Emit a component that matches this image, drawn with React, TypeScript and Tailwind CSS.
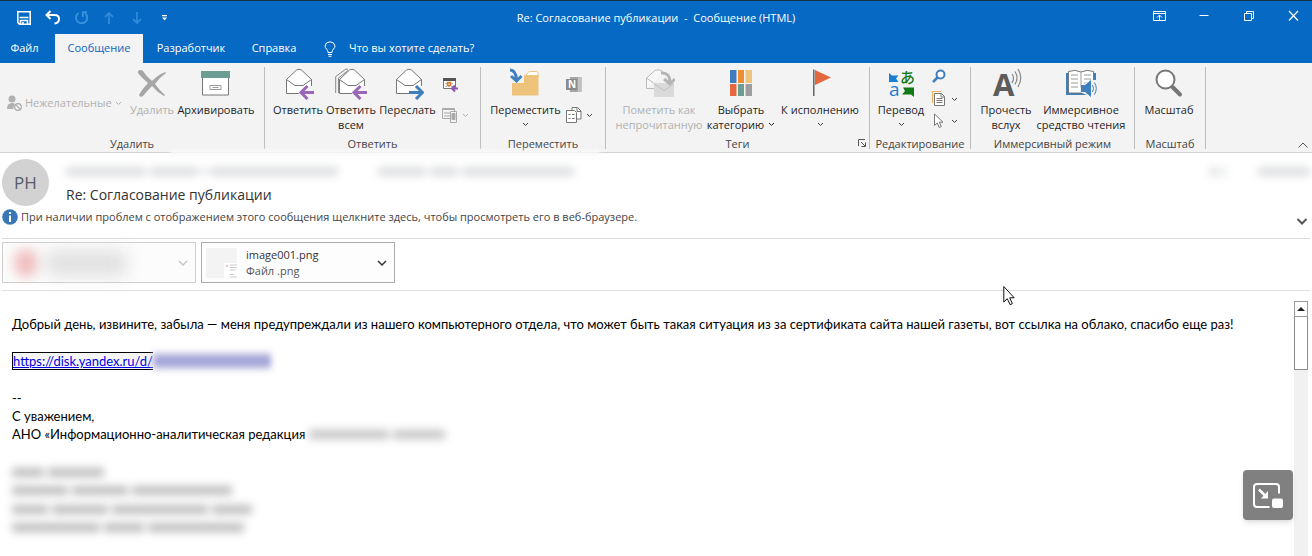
import type { ReactNode } from 'react';

function Chevron({ className = '' }: { className?: string }) {
  return (
    <svg className={`h-[5px] w-[7px] shrink-0 ${className}`} viewBox="0 0 7 5" fill="none" stroke="currentColor">
      <path d="M1 1l2.500 2.400L6 1" />
    </svg>
  );
}

function BigButton({
  icon,
  width,
  children,
  chevron = false,
  disabled = false,
}: {
  icon: ReactNode;
  width: string;
  children: ReactNode;
  chevron?: boolean;
  disabled?: boolean;
}) {
  return (
    <button
      type="button"
      disabled={disabled}
      className={`flex shrink-0 flex-col items-center whitespace-nowrap pt-px text-[11px] leading-[15px] ${width} ${
        disabled ? 'text-[#b1b1b1]' : 'text-[#1f1f1f]'
      }`}
    >
      <span className="mb-0.5 block h-8 w-8">{icon}</span>
      <span className="text-center">{children}</span>
      {chevron && <Chevron className="mt-[5px] text-[#444]" />}
    </button>
  );
}

function Group({ title, width, launcher = false, children }: { title: string; width: string; launcher?: boolean; children: ReactNode }) {
  return (
    <section aria-label={title} className={`flex h-[82px] shrink-0 flex-col border-r border-[#bdbdbd] ${width}`}>
      <div className="flex flex-1">{children}</div>
      <div className="relative text-center text-[11px] leading-[10px] text-[#444]">
        {title}
        {launcher && (
          <button type="button" aria-label="Параметры тегов" className="absolute right-[3px] top-0">
            <svg className="h-2 w-2" viewBox="0 0 8 8" fill="none" stroke="#555">
              <path d="M.5 7V.5H7M3 3l4 4M7.500 3.500v4h-4" />
            </svg>
          </button>
        )}
      </div>
    </section>
  );
}

function Envelope({ all = false, forward = false }: { all?: boolean; forward?: boolean }) {
  return (
    <svg viewBox="0 0 32 32" fill="none">
      {all && <path d="M.7 25V8.500L11 1l2 .3M3.500 25V10L13 2.500" stroke="#888" />}
      <path d="M4.500 25.500v-14L14.500 2q2.500-1.500 5 0l10 9.500v14z" fill="#fff" stroke="#777" />
      <path d="M4.500 11.500l8.500 6h8l8.500-6" stroke="#777" />
      <path d="M17 22h6v-4h7.500v12H17z" fill="#f3f3f3" />
      {forward ? (
        <path d="M17 24.500h13M24 18l6.500 6.500L24 31" stroke="#3f7fbd" strokeWidth="3" />
      ) : (
        <path d="M32 24.500H19M25.500 18L19 24.500l6.500 6.500" stroke="#9a67b8" strokeWidth="3" />
      )}
    </svg>
  );
}

const deleteIcon = (
  <svg viewBox="0 0 32 32" fill="#a6a6a6">
    <path d="M2 3q3-2 5 0 3 5 9 10Q23 6 29.500 4l.500 1q-6 4-11 11 5 7 10 11l-1 1q-7-4-12-10-5 5-9 10-3 2-4-1 3-6 9-12Q5 9 2 5z" />
  </svg>
);

const archiveIcon = (
  <svg viewBox="0 0 32 32" fill="none">
    <path d="M2.500 9v18h26V9" fill="#fff" stroke="#777" />
    <path d="M1 3h29v7H1z" fill="#6b9d92" />
    <path d="M10 17.500h11v4H10zM12.500 19.500h6" stroke="#999" />
  </svg>
);

const moveIcon = (
  <svg viewBox="0 0 32 32" fill="none">
    <path d="M15 9l2.500-4q1-1.500 3-1.500h6q1.500 0 1.500 2V10z" fill="#fff" stroke="#eec47c" />
    <path d="M2 15h12V7h14.500v20.500H2z" fill="#eec47c" />
    <path d="M0 2q6 0 6.500 10M1 8l5.500 5L11.500 8" stroke="#3f7fbd" strokeWidth="3" />
  </svg>
);

const unreadIcon = (
  <svg viewBox="0 0 32 32" fill="none">
    <path d="M3.500 20.500V10L12 2.500q3-1.500 6 0L21 5" stroke="#bbb" fill="#f8f8f8" />
    <path d="M3.500 20.500h8M3.500 10l7 5" stroke="#bbb" />
    <path d="M11 15h20v14H11z" fill="#dadada" />
    <path d="M11 16l10 6.500L31 16" stroke="#c2c2c2" />
    <path d="M18 5q9-1 9 10M21 11l6 5 5-5" stroke="#b5b5b5" strokeWidth="3" />
  </svg>
);

const categoryIcon = (
  <svg viewBox="0 0 32 32">
    <path d="M5 2h6.500v13H5z" fill="#3f7dc0" />
    <path d="M13 2h6v13h-6z" fill="#f08c32" />
    <path d="M20.500 2H27v13h-6.500z" fill="#eec47c" />
    <path d="M5 16h6.500v12H5z" fill="#e5673f" />
    <path d="M13 16h6v12h-6z" fill="#6b9d92" />
    <path d="M20.500 16H27v12h-6.500z" fill="#9d9d9d" />
  </svg>
);

const flagIcon = (
  <svg viewBox="0 0 32 32">
    <path d="M9 1.500h1.500V28H9z" fill="#666" />
    <path d="M11 2l16 7.500L11 17z" fill="#e5673f" />
  </svg>
);

const translateIcon = (
  <svg className="overflow-visible" viewBox="0 0 32 32">
    <path d="M4 5l3 2.500h6.500L11 10.500l2.500 3.500H4z" fill="#1a7fd4" />
    <path d="M18 19.500h11V29l-3-2.500h-9l3-3.500z" fill="#117a17" />
    <text x="4" y="28" fontSize="19" fill="#1a7fd4" className="font-['Open_Sans',sans-serif]">a</text>
    <text x="15" y="15" fontSize="15" fontWeight="500" fill="#117a17" className="font-['Noto_Sans_CJK_JP',sans-serif]">あ</text>
  </svg>
);

const readAloudIcon = (
  <svg className="overflow-visible" viewBox="0 0 32 32" fill="none">
    <text x="3" y="28" fontSize="31" fontWeight="700" fill="#5c5c5c" className="font-['Open_Sans',sans-serif]">A</text>
    <path d="M22 6q3 4 0 9M25 3.500q4 6 0 13M28 1q5.500 8.500 0 18" stroke="#888" strokeWidth="1.200" />
  </svg>
);

const immersiveIcon = (
  <svg viewBox="0 0 32 32" fill="none">
    <path d="M1 5h30v22H1z" fill="#3f7fbd" />
    <path d="M3.500 3.500Q10 1 16 4q6-3 12.500-.500V25H3.500z" fill="#fff" stroke="#777" />
    <path d="M16 4v21M6 7h7M6 11h7M6 15h7M6 19h7M19 7h7M19 11h7M19 15h3" stroke="#999" />
    <path d="M15 20l9-8h8v16h-8l-9-4z" fill="#f3f3f3" />
    <path d="M16 17h4l6-5v17l-6-5h-4z" fill="#3f7fbd" />
    <path d="M27.500 17q2 3.500 0 7M29.500 14.500q3.500 6 0 12" stroke="#3f7fbd" />
  </svg>
);

const zoomIcon = (
  <svg viewBox="0 0 32 32" fill="none">
    <path d="M19.500 19L27 26.500" stroke="#777" strokeWidth="4" strokeLinecap="round" />
    <circle cx="12.500" cy="11.500" r="9" fill="#fff" stroke="#777" strokeWidth="2" />
  </svg>
);

/* Hidden words are soft grey strips, one per word width */
function Redacted({ words, className = '' }: { words: string[]; className?: string }) {
  return (
    <span aria-hidden="true" className={`flex items-center gap-1 blur-[4px] ${className}`}>
      {words.map((w, i) => (
        <span key={i} className={`h-[9px] rounded-xs bg-current ${w}`} />
      ))}
    </span>
  );
}

function QuickAccess() {
  return (
    <div className="flex w-[200px] items-center pl-4">
      <button type="button" aria-label="Сохранить" className="w-[29px]">
        <svg className="h-4 w-4" viewBox="0 0 16 16" fill="none" stroke="#fff" strokeWidth="1.600">
          <path d="M1.800 1.800h12.400v12.400H3.500l-1.700-1.700zM3.500 7.500h9M4.500 14v-3.500h7V14M7 12v2" />
        </svg>
      </button>
      <button type="button" aria-label="Отменить" className="w-[29px]">
        <svg className="h-4 w-4" viewBox="0 0 16 16" fill="none" stroke="#fff" strokeWidth="2">
          <path d="M5.500 1L1.500 5l4 4M2 5h7.500q4.500 0 4.500 4t-4.500 4.500" />
        </svg>
      </button>
      <button type="button" aria-label="Повторить" className="w-[29px]" disabled>
        <svg className="h-4 w-4" viewBox="0 0 16 16" fill="none" stroke="#3a93de" strokeWidth="1.800">
          <path d="M4.500 3A5.600 5.600 0 1 0 11 3.200M8.800 7V2.200H13" />
        </svg>
      </button>
      <button type="button" aria-label="Предыдущий элемент" className="w-7" disabled>
        <svg className="h-4 w-4" viewBox="0 0 16 16" fill="none" stroke="#2f8ad8" strokeWidth="1.800">
          <path d="M6 14V3M2 7l4-4 4 4" />
        </svg>
      </button>
      <button type="button" aria-label="Следующий элемент" className="w-7" disabled>
        <svg className="h-4 w-4" viewBox="0 0 16 16" fill="none" stroke="#2f8ad8" strokeWidth="1.800">
          <path d="M6 2v11M2 9l4 4 4-4" />
        </svg>
      </button>
      <button type="button" aria-label="Настройка панели быстрого доступа">
        <svg className="h-4 w-4" viewBox="0 0 16 16" fill="#fff">
          <path d="M3 5h5v1.200H3zM3 7.500h5L5.500 10.500z" />
        </svg>
      </button>
    </div>
  );
}

function WindowButtons() {
  return (
    <div className="flex w-[200px] items-center justify-end pb-1 text-white">
      <button type="button" aria-label="Параметры отображения ленты" className="flex w-[52px] justify-center">
        <svg className="h-4 w-4" viewBox="0 0 16 16" fill="none" stroke="currentColor">
          <path d="M2.500 3.500h12v9h-12zM2.500 5.500h12M8.500 12V7M6 9.500L8.500 7 11 9.500" />
        </svg>
      </button>
      <button type="button" aria-label="Свернуть" className="flex w-[38px] justify-center">
        <svg className="h-4 w-4" viewBox="0 0 16 16" fill="none" stroke="currentColor">
          <path d="M3.500 7.500h9" />
        </svg>
      </button>
      <button type="button" aria-label="Свернуть в окно" className="flex w-[51px] justify-center">
        <svg className="h-4 w-4" viewBox="0 0 16 16" fill="none" stroke="currentColor">
          <path d="M4.500 5.500h7v7h-7zM6.500 5V3.500h7v7H12" />
        </svg>
      </button>
      <button type="button" aria-label="Закрыть" className="flex w-[38px] justify-center">
        <svg className="h-4 w-4" viewBox="0 0 16 16" fill="none" stroke="currentColor" strokeWidth="1.200">
          <path d="M4 3l9 9.500M13 3l-9 9.500" />
        </svg>
      </button>
    </div>
  );
}

function Tabs() {
  return (
    <nav className="flex h-[29px] items-stretch text-[11px] text-white">
      <button type="button" className="w-[55px] pr-1.5">Файл</button>
      <button type="button" className="w-[88px] bg-[#f3f3f3] text-[#0a66bf]">Сообщение</button>
      <button type="button" className="w-24">Разработчик</button>
      <button type="button" className="w-[70px]">Справка</button>
      <label htmlFor="tell-me" className="ml-[15px] flex items-center">
        <svg className="h-4 w-3" viewBox="0 0 12 16" fill="none" stroke="#fff">
          <path d="M4 11.500Q4 9.500 2.500 8 1 6.500 1 5q.500-4 5-4.200Q10.500 1 11 5q0 1.500-1.500 3T8 11.500zM4 13.500h4M4.500 15.300h3" />
        </svg>
      </label>
      <input
        id="tell-me"
        type="text"
        placeholder="Что вы хотите сделать?"
        className="ml-[13px] w-48 bg-transparent outline-none placeholder:text-white"
      />
    </nav>
  );
}

function Ribbon() {
  return (
    <div className="relative flex border-b border-[#d2d2d2] bg-[#f3f3f3] pb-[3px] pt-1">
      <Group title="Удалить" width="w-[265px]">
        <div className="flex w-[128px] items-center pl-1.5">
          <button type="button" disabled className="flex items-center gap-[3px] whitespace-nowrap text-[11px] text-[#b1b1b1]">
            <svg className="h-4 w-4" viewBox="0 0 16 16" fill="#b1b1b1">
              <circle cx="6" cy="4" r="3.500" />
              <path d="M1 14q0-6 5-6 2 0 3 1-2 2-1.500 5z" />
              <circle cx="12" cy="12" r="3.300" fill="#f3f3f3" stroke="#aaa" strokeWidth="1.200" />
              <path d="M9.700 9.700l4.600 4.600" stroke="#aaa" strokeWidth="1.200" />
            </svg>
            Нежелательные
            <Chevron />
          </button>
        </div>
        <BigButton icon={deleteIcon} width="w-12" disabled>Удалить</BigButton>
        <BigButton icon={archiveIcon} width="w-20">Архивировать</BigButton>
      </Group>

      <Group title="Ответить" width="w-[216px]">
        <div className="flex pl-2">
          <BigButton icon={<Envelope />} width="w-[50px]">Ответить</BigButton>
          <BigButton icon={<Envelope all />} width="w-14">Ответить<br />всем</BigButton>
          <BigButton icon={<Envelope forward />} width="w-[57px]">Переслать</BigButton>
        </div>
        <div className="flex flex-col gap-3.5 pl-1.5 pt-2.5">
          <button type="button" aria-label="Собрание">
            <svg className="h-4 w-4" viewBox="0 0 16 16" fill="none">
              <path d="M1.500 1.500h12v10h-12z" fill="#fff" stroke="#777" />
              <path d="M1 1h13v3H1z" fill="#555" />
              <path d="M3 6.500h9M3 9.500h9" stroke="#bbb" strokeDasharray="2 1" />
              <path d="M5.500 5.500h3v3h-3z" stroke="#e07b28" strokeWidth="1.500" />
              <path d="M16 11.500h-5.500M13 8.500l-3 3 3 3" stroke="#8e56b0" strokeWidth="2" />
            </svg>
          </button>
          <button type="button" aria-label="Дополнительно" disabled className="flex items-center gap-1 text-[#b1b1b1]">
            <svg className="h-4 w-4" viewBox="0 0 16 16" fill="none" stroke="#aaa">
              <path d="M.5 1.500h12v10H.500zM0 2.500h13M2 6h6M2 9h6" />
              <path d="M8.500 4.500h6v11h-6z" fill="#f3f3f3" />
              <path d="M10 6.500h3v6h-3z" fill="#aaa" />
            </svg>
            <Chevron />
          </button>
        </div>
      </Group>

      <Group title="Переместить" width="w-[125px]">
        <BigButton icon={moveIcon} width="w-[85px] pl-1" chevron>Переместить</BigButton>
        <div className="flex flex-col gap-3.5 pt-2.5">
          <button type="button" aria-label="OneNote" disabled>
            <svg className="h-4 w-4" viewBox="0 0 16 16">
              <path d="M4 0h8v15H4z" fill="#a5a5a5" />
              <path d="M12 0h4v15h-4z" fill="#c3c3c3" />
              <path d="M0 2h11v11H0z" fill="#8b8b8b" />
              <text x="2" y="11" fontSize="10" fontWeight="700" fill="#fff" className="font-['Open_Sans',sans-serif]">N</text>
            </svg>
          </button>
          <button type="button" aria-label="Действия" className="flex items-center gap-1 text-[#444]">
            <svg className="h-4 w-4" viewBox="0 0 16 16" fill="none" stroke="#777">
              <path d="M6 4V.5h5.500L15 4v8h-4" fill="#fff" />
              <path d="M.5 3.500h8l2 2v10h-10z" fill="#fff" />
              <path d="M2.500 7.500h2M6 7.500h2.500M2.500 11.500h2M6 11.500h2.500M11 1v3.500h4" />
            </svg>
            <Chevron />
          </button>
        </div>
      </Group>

      <Group title="Теги" width="w-[264px]" launcher>
        <div className="flex pl-2">
          <BigButton icon={unreadIcon} width="w-[90px]" disabled>Пометить как<br />непрочитанную</BigButton>
          <BigButton icon={categoryIcon} width="w-[74px]">
            Выбрать
            <span className="flex items-center gap-1">
              категорию
              <Chevron />
            </span>
          </BigButton>
          <BigButton icon={flagIcon} width="w-[84px]" chevron>К исполнению</BigButton>
        </div>
      </Group>

      <Group title="Редактирование" width="w-[101px]">
        <BigButton icon={translateIcon} width="w-[62px]" chevron>Перевод</BigButton>
        <div className="flex flex-col gap-1.5 pt-0.5 text-[#444]">
          <button type="button" aria-label="Найти">
            <svg className="h-4 w-4" viewBox="0 0 16 16" fill="none" stroke="#3f7fbd" strokeWidth="2">
              <circle cx="8.500" cy="5.500" r="4" fill="#fff" />
              <path d="M5.500 8.500L1 13" strokeWidth="2.500" />
            </svg>
          </button>
          <button type="button" aria-label="Связанные" className="flex items-center gap-[3px]">
            <svg className="h-4 w-4" viewBox="0 0 16 16" fill="none" stroke="#777">
              <path d="M.5 12V.5H9" stroke="#eeb05c" />
              <path d="M2.500 2.500h7l3 3v9h-10z" fill="#fff" />
              <path d="M9 2.500V6h3.500M4.500 7.500h6M4.500 9.500h6M4.500 11.500h6" />
            </svg>
            <Chevron />
          </button>
          <button type="button" aria-label="Выделить" className="flex items-center gap-[3px]">
            <svg className="h-4 w-4" viewBox="0 0 16 16" fill="#fff" stroke="#777">
              <path d="M2.500 1v11.500l2.800-2.500 2 4.500 2-1-2-4.300H11z" />
            </svg>
            <Chevron />
          </button>
        </div>
      </Group>

      <Group title="Иммерсивный режим" width="w-[164px]">
        <BigButton icon={readAloudIcon} width="w-[70px]">Прочесть<br />вслух</BigButton>
        <BigButton icon={immersiveIcon} width="w-20">Иммерсивное<br />средство чтения</BigButton>
      </Group>

      <Group title="Масштаб" width="w-[71px]">
        <BigButton icon={zoomIcon} width="w-[68px]">Масштаб</BigButton>
      </Group>

      <button type="button" aria-label="Свернуть ленту" className="ml-auto mr-[3px] self-end text-[#555]">
        <svg className="h-3 w-3" viewBox="0 0 12 12" fill="none" stroke="currentColor">
          <path d="M1.500 10.500L6 6l4.500 4.500" />
        </svg>
      </button>

      {/* soft edge where the smudge over the sender line reaches the ribbon */}
      <span aria-hidden="true" className="absolute -bottom-1 left-[170px] h-1.5 w-[430px] bg-[#f9f9f9] blur-[2px]" />
    </div>
  );
}

function MessageHeader() {
  return (
    <header className="mx-0.5 border-b border-[#dcdcdc] pb-[11px] pt-1.5">
      <div className="flex">
        <div className="flex h-[47px] w-[47px] items-center justify-center rounded-full bg-[#d2d2d2] text-[17px] text-[#555c66]">
          РН
        </div>
        <div className="ml-[17px] flex-1">
          <div className="flex h-6 items-center justify-between text-[#dcdee0]">
            <div className="flex gap-10">
              <Redacted words={['w-20', 'w-12', 'w-1', 'w-32']} />
              <Redacted words={['w-12', 'w-7', 'w-28']} />
            </div>
            <div className="flex gap-8">
              <Redacted words={['w-2', 'w-1']} />
              <Redacted words={['w-[52px]']} />
            </div>
          </div>
          <h1 className="text-[14px] leading-6 text-[#333]">Re: Согласование публикации</h1>
        </div>
      </div>
      <div className="flex h-5 items-center justify-between">
        <button type="button" className="flex items-center gap-[3px] text-[11px] text-[#444]">
          <svg className="h-4 w-4" viewBox="0 0 16 16">
            <circle cx="8" cy="8" r="7.800" fill="#3a77b7" />
            <path d="M7 6.500h2V13H7zM7 3h2v2H7z" fill="#fff" />
          </svg>
          При наличии проблем с отображением этого сообщения щелкните здесь, чтобы просмотреть его в веб-браузере.
        </button>
        <button type="button" aria-label="Развернуть заголовок" className="mr-0.5 self-end">
          <svg className="h-3 w-3" viewBox="0 0 12 12" fill="none" stroke="#555" strokeWidth="2">
            <path d="M1.500 4L6 8.500 10.500 4" />
          </svg>
        </button>
      </div>
    </header>
  );
}

function Attachments() {
  return (
    <div className="mx-0.5 flex gap-[5px] border-b border-[#e2e2e2] pb-[7px] pt-[3px] text-[11px]">
      <div className="flex h-[41px] w-[194px] items-center justify-between border border-[#cfcfcf] bg-[#fcfcfc] px-[7px]">
        <div aria-hidden="true" className="flex items-center">
          <span className="ml-1 h-7 w-6 rounded-full bg-[#f0c0c0] blur-[6px]" />
          <span className="ml-2 h-6 w-20 bg-[#dedede] blur-[9px]" />
        </div>
        <button type="button" aria-label="Действия с вложением">
          <svg className="h-[10px] w-[10px]" viewBox="0 0 10 10" fill="none" stroke="#c4c4c4" strokeWidth="1.500">
            <path d="M1 3l4 4 4-4" />
          </svg>
        </button>
      </div>
      <div className="flex h-[41px] w-[194px] items-center border border-[#ababab] bg-[#fdfdfd] pl-1 pr-[7px]">
        <svg className="h-8 w-8 shrink-0" viewBox="0 0 32 32">
          <path d="M0 1h31v30H0z" fill="#f3f3f3" />
          <path d="M18 16h14v15H18z" fill="#fff" />
          <path d="M20 18h2v2h-2z" fill="#f3c3c3" />
          <path d="M24 18h7M24 20.500h7M24 23h6M24 27.500h4M24 30h7" stroke="#ccc" />
        </svg>
        <div className="ml-2 flex-1 leading-4">
          <p className="text-[#333]">image001.png</p>
          <p className="text-[#555]">Файл .png</p>
        </div>
        <button type="button" aria-label="Действия с вложением">
          <svg className="h-[10px] w-[10px]" viewBox="0 0 10 10" fill="none" stroke="#333" strokeWidth="1.500">
            <path d="M1 3l4 4 4-4" />
          </svg>
        </button>
      </div>
    </div>
  );
}

function MessageBody() {
  return (
    <main className="flex flex-1 pt-[10px]">
      <div className="min-w-0 flex-1 pl-3 pt-3.5 font-['Lato','Open_Sans',sans-serif] text-[13px] leading-[18px] text-black">
        <p className="whitespace-nowrap">
          Добрый день, извините, забыла — меня предупреждали из нашего компьютерного отдела, что может быть такая ситуация из за
          сертификата сайта нашей газеты, вот ссылка на облако, спасибо еще раз!
        </p>
        <p className="mt-[19px] flex">
          <a href="#cloud" className="border border-r-0 border-black bg-[#f5f5f5] leading-4 text-[#0000e6] underline">
            https://disk.yandex.ru/d/
          </a>
          <span aria-hidden="true" className="flex h-[18px] w-[118px] items-center bg-[#d2d2e4] blur-[3px]">
            <span className="h-2.5 w-full bg-[#a3a3da]" />
          </span>
        </p>
        <div className="mt-[19px] leading-[18px]">
          <p>--</p>
          <p>С уважением,</p>
          <p className="flex">
            АНО «Информационно-аналитическая редакция
            <Redacted words={['w-20', 'w-[52px]']} className="ml-1 text-[#c4c4c4]" />
          </p>
        </div>
        <div className="mt-5 text-[#bdbdbd]">
          <Redacted words={['w-8', 'w-14']} className="h-[18px]" />
          <Redacted words={['w-14', 'w-14', 'w-[100px]']} className="h-[19px]" />
          <Redacted words={['w-9', 'w-14', 'w-24', 'w-10']} className="h-[18px]" />
          <Redacted words={['w-[88px]', 'w-10', 'w-24']} className="h-[19px]" />
        </div>
      </div>
      <div className="mr-1 flex w-[14px] shrink-0 flex-col bg-[#f1f1f1]">
        <button type="button" aria-label="Прокрутить вверх" className="flex h-4 items-center justify-center border border-[#9a9a9a] bg-white">
          <svg className="h-1 w-2" viewBox="0 0 8 4">
            <path d="M0 4l4-4 4 4z" fill="#222" />
          </svg>
        </button>
        <div className="h-[53px] border border-t-0 border-[#8a8a8a] bg-white" />
      </div>
    </main>
  );
}

export default function App() {
  return (
    <div className="relative flex min-h-screen flex-col overflow-hidden bg-white font-['Open_Sans','Noto_Sans',sans-serif]">
      <div className="border-t border-[#16324b] bg-[#0669c3]">
        <div className="flex h-[33px] items-stretch justify-between">
          <QuickAccess />
          <p className="self-center whitespace-pre pt-0.5 text-[11px] text-white">Re: Согласование публикации  -  Сообщение (HTML)</p>
          <WindowButtons />
        </div>
        <Tabs />
      </div>
      <Ribbon />
      <MessageHeader />
      <Attachments />
      <MessageBody />

      <button
        type="button"
        aria-label="Картинка в картинке"
        className="absolute bottom-9 right-[19px] flex h-[50px] w-[50px] items-center justify-center rounded bg-[#808080] shadow-md"
      >
        <svg className="h-8 w-8" viewBox="0 0 32 32" fill="none" stroke="#fff" strokeWidth="2">
          <path d="M27 14.500V8q0-3-3-3H5Q2 5 2 8v17q0 3 3 3h12.500" />
          <path d="M7 10.500l7 7" strokeWidth="2.500" />
          <path d="M16 12v7.500H9z" fill="#fff" stroke="none" />
          <rect x="20" y="19.500" width="11" height="9.500" rx="2" fill="#fff" stroke="none" />
        </svg>
      </button>

      <svg className="pointer-events-none absolute left-[1003px] top-[285px] h-[21px] w-3" viewBox="0 0 12 21" fill="#fff" stroke="#111">
        <path d="M.8 1.500v15.500l3.500-3.300 2.800 6 2.300-1-2.700-5.900h4.500z" />
      </svg>
    </div>
  );
}
